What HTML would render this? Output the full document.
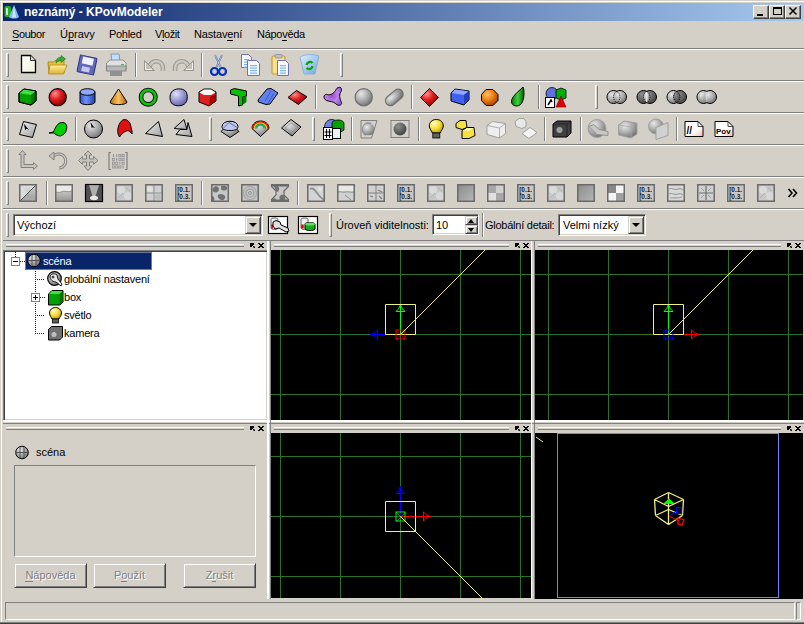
<!DOCTYPE html><html><head><meta charset="utf-8"><style>
*{margin:0;padding:0}
html,body{width:804px;height:624px;overflow:hidden;background:#d4d0c8;position:relative;font-family:"Liberation Sans",sans-serif;font-size:11px;color:#000}
.a{position:absolute}
.t{position:absolute;white-space:nowrap;line-height:13px}
u{text-decoration:none;border-bottom:1px solid currentColor}
</style></head><body>
<div style="position:absolute;left:0px;top:1px;width:804px;height:1px;background:#fff;"></div>
<div style="position:absolute;left:1px;top:1px;width:1px;height:623px;background:#fff;"></div>
<div style="position:absolute;left:0px;top:622px;width:804px;height:1px;background:#808080;"></div>
<div style="position:absolute;left:0px;top:623px;width:804px;height:1px;background:#404040;"></div>
<div style="position:absolute;left:3px;top:3px;width:801px;height:18px;background:linear-gradient(to right,#0a246a,#a6caf0);"></div>
<div class="t" style="left:24px;top:6px;color:#fff;font-weight:bold;font-size:12px">neznámý - KPovModeler</div>
<div class="a" style="left:753px;top:5px;width:16px;height:14px;box-sizing:border-box;background:#d4d0c8;border-top:1px solid #fff;border-left:1px solid #fff;border-right:1px solid #404040;border-bottom:1px solid #404040;box-shadow:inset -1px -1px 0 #808080"></div>
<div class="a" style="left:769px;top:5px;width:16px;height:14px;box-sizing:border-box;background:#d4d0c8;border-top:1px solid #fff;border-left:1px solid #fff;border-right:1px solid #404040;border-bottom:1px solid #404040;box-shadow:inset -1px -1px 0 #808080"></div>
<div class="a" style="left:785px;top:5px;width:16px;height:14px;box-sizing:border-box;background:#d4d0c8;border-top:1px solid #fff;border-left:1px solid #fff;border-right:1px solid #404040;border-bottom:1px solid #404040;box-shadow:inset -1px -1px 0 #808080"></div>
<div class="t" style="left:12px;top:28px;letter-spacing:-0.4px"><u>S</u>oubor</div>
<div class="t" style="left:60px;top:28px;letter-spacing:0px">Ú<u>p</u>ravy</div>
<div class="t" style="left:109px;top:28px;letter-spacing:-0.3px">Po<u>h</u>led</div>
<div class="t" style="left:155px;top:28px;letter-spacing:-0.4px">V<u>l</u>ožit</div>
<div class="t" style="left:194px;top:28px;letter-spacing:-0.15px">Nastav<u>e</u>ní</div>
<div class="t" style="left:257px;top:28px;letter-spacing:-0.28px">Nápo<u>v</u>ěda</div>
<div style="position:absolute;left:3px;top:48px;width:801px;height:1px;background:#808080;"></div>
<div style="position:absolute;left:3px;top:49px;width:801px;height:1px;background:#fff;"></div>
<div style="position:absolute;left:3px;top:80px;width:801px;height:1px;background:#808080;"></div>
<div style="position:absolute;left:3px;top:81px;width:801px;height:1px;background:#fff;"></div>
<div style="position:absolute;left:3px;top:112px;width:801px;height:1px;background:#808080;"></div>
<div style="position:absolute;left:3px;top:113px;width:801px;height:1px;background:#fff;"></div>
<div style="position:absolute;left:3px;top:144px;width:801px;height:1px;background:#808080;"></div>
<div style="position:absolute;left:3px;top:145px;width:801px;height:1px;background:#fff;"></div>
<div style="position:absolute;left:3px;top:176px;width:801px;height:1px;background:#808080;"></div>
<div style="position:absolute;left:3px;top:177px;width:801px;height:1px;background:#fff;"></div>
<div style="position:absolute;left:3px;top:208px;width:801px;height:1px;background:#808080;"></div>
<div style="position:absolute;left:3px;top:209px;width:801px;height:1px;background:#fff;"></div>
<div style="position:absolute;left:3px;top:240px;width:801px;height:1px;background:#808080;"></div>
<div class="a" style="left:6px;top:53px;width:3px;height:24px;box-sizing:border-box;border-top:1px solid #fff;border-left:1px solid #fff;border-right:1px solid #808080;border-bottom:1px solid #808080"></div>
<div class="a" style="left:340px;top:53px;width:3px;height:24px;box-sizing:border-box;border-top:1px solid #fff;border-left:1px solid #fff;border-right:1px solid #808080;border-bottom:1px solid #808080"></div>
<div class="a" style="left:6px;top:85px;width:3px;height:24px;box-sizing:border-box;border-top:1px solid #fff;border-left:1px solid #fff;border-right:1px solid #808080;border-bottom:1px solid #808080"></div>
<div class="a" style="left:595px;top:85px;width:3px;height:24px;box-sizing:border-box;border-top:1px solid #fff;border-left:1px solid #fff;border-right:1px solid #808080;border-bottom:1px solid #808080"></div>
<div class="a" style="left:6px;top:117px;width:3px;height:24px;box-sizing:border-box;border-top:1px solid #fff;border-left:1px solid #fff;border-right:1px solid #808080;border-bottom:1px solid #808080"></div>
<div class="a" style="left:209px;top:117px;width:3px;height:24px;box-sizing:border-box;border-top:1px solid #fff;border-left:1px solid #fff;border-right:1px solid #808080;border-bottom:1px solid #808080"></div>
<div class="a" style="left:312px;top:117px;width:3px;height:24px;box-sizing:border-box;border-top:1px solid #fff;border-left:1px solid #fff;border-right:1px solid #808080;border-bottom:1px solid #808080"></div>
<div class="a" style="left:6px;top:149px;width:3px;height:24px;box-sizing:border-box;border-top:1px solid #fff;border-left:1px solid #fff;border-right:1px solid #808080;border-bottom:1px solid #808080"></div>
<div class="a" style="left:6px;top:181px;width:3px;height:24px;box-sizing:border-box;border-top:1px solid #fff;border-left:1px solid #fff;border-right:1px solid #808080;border-bottom:1px solid #808080"></div>
<div class="a" style="left:6px;top:213px;width:3px;height:24px;box-sizing:border-box;border-top:1px solid #fff;border-left:1px solid #fff;border-right:1px solid #808080;border-bottom:1px solid #808080"></div>
<div class="a" style="left:329px;top:213px;width:3px;height:24px;box-sizing:border-box;border-top:1px solid #fff;border-left:1px solid #fff;border-right:1px solid #808080;border-bottom:1px solid #808080"></div>
<div style="position:absolute;left:135px;top:53px;width:1px;height:24px;background:#808080;"></div><div style="position:absolute;left:136px;top:53px;width:1px;height:24px;background:#fff;"></div>
<div style="position:absolute;left:201px;top:53px;width:1px;height:24px;background:#808080;"></div><div style="position:absolute;left:202px;top:53px;width:1px;height:24px;background:#fff;"></div>
<div style="position:absolute;left:315px;top:85px;width:1px;height:24px;background:#808080;"></div><div style="position:absolute;left:316px;top:85px;width:1px;height:24px;background:#fff;"></div>
<div style="position:absolute;left:411px;top:85px;width:1px;height:24px;background:#808080;"></div><div style="position:absolute;left:412px;top:85px;width:1px;height:24px;background:#fff;"></div>
<div style="position:absolute;left:538px;top:85px;width:1px;height:24px;background:#808080;"></div><div style="position:absolute;left:539px;top:85px;width:1px;height:24px;background:#fff;"></div>
<div style="position:absolute;left:75px;top:117px;width:1px;height:24px;background:#808080;"></div><div style="position:absolute;left:76px;top:117px;width:1px;height:24px;background:#fff;"></div>
<div style="position:absolute;left:351px;top:117px;width:1px;height:24px;background:#808080;"></div><div style="position:absolute;left:352px;top:117px;width:1px;height:24px;background:#fff;"></div>
<div style="position:absolute;left:418px;top:117px;width:1px;height:24px;background:#808080;"></div><div style="position:absolute;left:419px;top:117px;width:1px;height:24px;background:#fff;"></div>
<div style="position:absolute;left:544px;top:117px;width:1px;height:24px;background:#808080;"></div><div style="position:absolute;left:545px;top:117px;width:1px;height:24px;background:#fff;"></div>
<div style="position:absolute;left:580px;top:117px;width:1px;height:24px;background:#808080;"></div><div style="position:absolute;left:581px;top:117px;width:1px;height:24px;background:#fff;"></div>
<div style="position:absolute;left:676px;top:117px;width:1px;height:24px;background:#808080;"></div><div style="position:absolute;left:677px;top:117px;width:1px;height:24px;background:#fff;"></div>
<div style="position:absolute;left:46px;top:181px;width:1px;height:24px;background:#808080;"></div><div style="position:absolute;left:47px;top:181px;width:1px;height:24px;background:#fff;"></div>
<div style="position:absolute;left:201px;top:181px;width:1px;height:24px;background:#808080;"></div><div style="position:absolute;left:202px;top:181px;width:1px;height:24px;background:#fff;"></div>
<div style="position:absolute;left:297px;top:181px;width:1px;height:24px;background:#808080;"></div><div style="position:absolute;left:298px;top:181px;width:1px;height:24px;background:#fff;"></div>
<div style="position:absolute;left:482px;top:213px;width:1px;height:24px;background:#808080;"></div><div style="position:absolute;left:483px;top:213px;width:1px;height:24px;background:#fff;"></div>
<!--ICONS-->
<div class="a" style="left:13px;top:214px;width:250px;height:22px;box-sizing:border-box;background:#fff;border-top:1px solid #808080;border-left:1px solid #808080;border-right:1px solid #fff;border-bottom:1px solid #fff;box-shadow:inset 1px 1px 0 #404040,inset -1px -1px 0 #d4d0c8"></div>
<div class="t" style="left:17px;top:219px">Výchozí</div>
<div class="a" style="left:245px;top:216px;width:16px;height:18px;box-sizing:border-box;background:#d4d0c8;border-top:1px solid #d4d0c8;border-left:1px solid #d4d0c8;border-right:1px solid #404040;border-bottom:1px solid #404040;box-shadow:inset 1px 1px 0 #fff,inset -1px -1px 0 #808080"></div>
<div class="a" style="left:249px;top:223px;width:0;height:0;border-left:4px solid transparent;border-right:4px solid transparent;border-top:4px solid #000"></div>
<div class="t" style="left:336px;top:219px">Úroveň viditelnosti:</div>
<div class="a" style="left:432px;top:214px;width:47px;height:21px;box-sizing:border-box;background:#fff;border-top:1px solid #808080;border-left:1px solid #808080;border-right:1px solid #fff;border-bottom:1px solid #fff;box-shadow:inset 1px 1px 0 #404040,inset -1px -1px 0 #d4d0c8"></div>
<div class="t" style="left:436px;top:219px">10</div>
<div class="a" style="left:465px;top:216px;width:13px;height:9px;box-sizing:border-box;background:#d4d0c8;border-top:1px solid #d4d0c8;border-left:1px solid #d4d0c8;border-right:1px solid #404040;border-bottom:1px solid #404040;box-shadow:inset 1px 1px 0 #fff,inset -1px -1px 0 #808080"></div>
<div class="a" style="left:465px;top:225px;width:13px;height:9px;box-sizing:border-box;background:#d4d0c8;border-top:1px solid #d4d0c8;border-left:1px solid #d4d0c8;border-right:1px solid #404040;border-bottom:1px solid #404040;box-shadow:inset 1px 1px 0 #fff,inset -1px -1px 0 #808080"></div>
<div class="a" style="left:468px;top:219px;width:0;height:0;border-left:3.5px solid transparent;border-right:3.5px solid transparent;border-bottom:4px solid #000"></div>
<div class="a" style="left:468px;top:228px;width:0;height:0;border-left:3.5px solid transparent;border-right:3.5px solid transparent;border-top:4px solid #000"></div>
<div class="t" style="left:485px;top:219px;letter-spacing:-0.25px">Globální detail:</div>
<div class="a" style="left:558px;top:214px;width:88px;height:22px;box-sizing:border-box;background:#fff;border-top:1px solid #808080;border-left:1px solid #808080;border-right:1px solid #fff;border-bottom:1px solid #fff;box-shadow:inset 1px 1px 0 #404040,inset -1px -1px 0 #d4d0c8"></div>
<div class="t" style="left:563px;top:219px">Velmi nízký</div>
<div class="a" style="left:628px;top:216px;width:16px;height:18px;box-sizing:border-box;background:#d4d0c8;border-top:1px solid #d4d0c8;border-left:1px solid #d4d0c8;border-right:1px solid #404040;border-bottom:1px solid #404040;box-shadow:inset 1px 1px 0 #fff,inset -1px -1px 0 #808080"></div>
<div class="a" style="left:632px;top:223px;width:0;height:0;border-left:4px solid transparent;border-right:4px solid transparent;border-top:4px solid #000"></div>
<div class="a" style="left:6px;top:244px;width:238px;height:3px;box-sizing:border-box;border-top:1px solid #fff;border-bottom:1px solid #808080"></div><svg class="a" style="left:250px;top:243px" width="14" height="5" shape-rendering="crispEdges"><rect x="0" y="0" width="4" height="2"/><rect x="0" y="0" width="2" height="4"/><rect x="2" y="2" width="1" height="1"/><rect x="3" y="3" width="1" height="1"/><rect x="4" y="4" width="1" height="1"/><rect x="4" y="3" width="1" height="1" fill-opacity=".5"/><rect x="3" y="4" width="1" height="1" fill-opacity=".5"/><rect x="8" y="0" width="1" height="1"/><rect x="9" y="0" width="1" height="1"/><rect x="12" y="0" width="1" height="1"/><rect x="13" y="0" width="1" height="1"/><rect x="9" y="1" width="1" height="1"/><rect x="10" y="1" width="1" height="1"/><rect x="11" y="1" width="1" height="1"/><rect x="12" y="1" width="1" height="1"/><rect x="10" y="2" width="1" height="1"/><rect x="11" y="2" width="1" height="1"/><rect x="9" y="3" width="1" height="1"/><rect x="10" y="3" width="1" height="1"/><rect x="11" y="3" width="1" height="1"/><rect x="12" y="3" width="1" height="1"/><rect x="8" y="4" width="1" height="1"/><rect x="9" y="4" width="1" height="1"/><rect x="12" y="4" width="1" height="1"/><rect x="13" y="4" width="1" height="1"/></svg>
<div class="a" style="left:6px;top:427px;width:238px;height:3px;box-sizing:border-box;border-top:1px solid #fff;border-bottom:1px solid #808080"></div><svg class="a" style="left:250px;top:426px" width="14" height="5" shape-rendering="crispEdges"><rect x="0" y="0" width="4" height="2"/><rect x="0" y="0" width="2" height="4"/><rect x="2" y="2" width="1" height="1"/><rect x="3" y="3" width="1" height="1"/><rect x="4" y="4" width="1" height="1"/><rect x="4" y="3" width="1" height="1" fill-opacity=".5"/><rect x="3" y="4" width="1" height="1" fill-opacity=".5"/><rect x="8" y="0" width="1" height="1"/><rect x="9" y="0" width="1" height="1"/><rect x="12" y="0" width="1" height="1"/><rect x="13" y="0" width="1" height="1"/><rect x="9" y="1" width="1" height="1"/><rect x="10" y="1" width="1" height="1"/><rect x="11" y="1" width="1" height="1"/><rect x="12" y="1" width="1" height="1"/><rect x="10" y="2" width="1" height="1"/><rect x="11" y="2" width="1" height="1"/><rect x="9" y="3" width="1" height="1"/><rect x="10" y="3" width="1" height="1"/><rect x="11" y="3" width="1" height="1"/><rect x="12" y="3" width="1" height="1"/><rect x="8" y="4" width="1" height="1"/><rect x="9" y="4" width="1" height="1"/><rect x="12" y="4" width="1" height="1"/><rect x="13" y="4" width="1" height="1"/></svg>
<div class="a" style="left:274px;top:244px;width:235px;height:3px;box-sizing:border-box;border-top:1px solid #fff;border-bottom:1px solid #808080"></div><svg class="a" style="left:515px;top:243px" width="14" height="5" shape-rendering="crispEdges"><rect x="0" y="0" width="4" height="2"/><rect x="0" y="0" width="2" height="4"/><rect x="2" y="2" width="1" height="1"/><rect x="3" y="3" width="1" height="1"/><rect x="4" y="4" width="1" height="1"/><rect x="4" y="3" width="1" height="1" fill-opacity=".5"/><rect x="3" y="4" width="1" height="1" fill-opacity=".5"/><rect x="8" y="0" width="1" height="1"/><rect x="9" y="0" width="1" height="1"/><rect x="12" y="0" width="1" height="1"/><rect x="13" y="0" width="1" height="1"/><rect x="9" y="1" width="1" height="1"/><rect x="10" y="1" width="1" height="1"/><rect x="11" y="1" width="1" height="1"/><rect x="12" y="1" width="1" height="1"/><rect x="10" y="2" width="1" height="1"/><rect x="11" y="2" width="1" height="1"/><rect x="9" y="3" width="1" height="1"/><rect x="10" y="3" width="1" height="1"/><rect x="11" y="3" width="1" height="1"/><rect x="12" y="3" width="1" height="1"/><rect x="8" y="4" width="1" height="1"/><rect x="9" y="4" width="1" height="1"/><rect x="12" y="4" width="1" height="1"/><rect x="13" y="4" width="1" height="1"/></svg>
<div class="a" style="left:538px;top:244px;width:243px;height:3px;box-sizing:border-box;border-top:1px solid #fff;border-bottom:1px solid #808080"></div><svg class="a" style="left:787px;top:243px" width="14" height="5" shape-rendering="crispEdges"><rect x="0" y="0" width="4" height="2"/><rect x="0" y="0" width="2" height="4"/><rect x="2" y="2" width="1" height="1"/><rect x="3" y="3" width="1" height="1"/><rect x="4" y="4" width="1" height="1"/><rect x="4" y="3" width="1" height="1" fill-opacity=".5"/><rect x="3" y="4" width="1" height="1" fill-opacity=".5"/><rect x="8" y="0" width="1" height="1"/><rect x="9" y="0" width="1" height="1"/><rect x="12" y="0" width="1" height="1"/><rect x="13" y="0" width="1" height="1"/><rect x="9" y="1" width="1" height="1"/><rect x="10" y="1" width="1" height="1"/><rect x="11" y="1" width="1" height="1"/><rect x="12" y="1" width="1" height="1"/><rect x="10" y="2" width="1" height="1"/><rect x="11" y="2" width="1" height="1"/><rect x="9" y="3" width="1" height="1"/><rect x="10" y="3" width="1" height="1"/><rect x="11" y="3" width="1" height="1"/><rect x="12" y="3" width="1" height="1"/><rect x="8" y="4" width="1" height="1"/><rect x="9" y="4" width="1" height="1"/><rect x="12" y="4" width="1" height="1"/><rect x="13" y="4" width="1" height="1"/></svg>
<div class="a" style="left:274px;top:427px;width:235px;height:3px;box-sizing:border-box;border-top:1px solid #fff;border-bottom:1px solid #808080"></div><svg class="a" style="left:515px;top:426px" width="14" height="5" shape-rendering="crispEdges"><rect x="0" y="0" width="4" height="2"/><rect x="0" y="0" width="2" height="4"/><rect x="2" y="2" width="1" height="1"/><rect x="3" y="3" width="1" height="1"/><rect x="4" y="4" width="1" height="1"/><rect x="4" y="3" width="1" height="1" fill-opacity=".5"/><rect x="3" y="4" width="1" height="1" fill-opacity=".5"/><rect x="8" y="0" width="1" height="1"/><rect x="9" y="0" width="1" height="1"/><rect x="12" y="0" width="1" height="1"/><rect x="13" y="0" width="1" height="1"/><rect x="9" y="1" width="1" height="1"/><rect x="10" y="1" width="1" height="1"/><rect x="11" y="1" width="1" height="1"/><rect x="12" y="1" width="1" height="1"/><rect x="10" y="2" width="1" height="1"/><rect x="11" y="2" width="1" height="1"/><rect x="9" y="3" width="1" height="1"/><rect x="10" y="3" width="1" height="1"/><rect x="11" y="3" width="1" height="1"/><rect x="12" y="3" width="1" height="1"/><rect x="8" y="4" width="1" height="1"/><rect x="9" y="4" width="1" height="1"/><rect x="12" y="4" width="1" height="1"/><rect x="13" y="4" width="1" height="1"/></svg>
<div class="a" style="left:538px;top:427px;width:243px;height:3px;box-sizing:border-box;border-top:1px solid #fff;border-bottom:1px solid #808080"></div><svg class="a" style="left:787px;top:426px" width="14" height="5" shape-rendering="crispEdges"><rect x="0" y="0" width="4" height="2"/><rect x="0" y="0" width="2" height="4"/><rect x="2" y="2" width="1" height="1"/><rect x="3" y="3" width="1" height="1"/><rect x="4" y="4" width="1" height="1"/><rect x="4" y="3" width="1" height="1" fill-opacity=".5"/><rect x="3" y="4" width="1" height="1" fill-opacity=".5"/><rect x="8" y="0" width="1" height="1"/><rect x="9" y="0" width="1" height="1"/><rect x="12" y="0" width="1" height="1"/><rect x="13" y="0" width="1" height="1"/><rect x="9" y="1" width="1" height="1"/><rect x="10" y="1" width="1" height="1"/><rect x="11" y="1" width="1" height="1"/><rect x="12" y="1" width="1" height="1"/><rect x="10" y="2" width="1" height="1"/><rect x="11" y="2" width="1" height="1"/><rect x="9" y="3" width="1" height="1"/><rect x="10" y="3" width="1" height="1"/><rect x="11" y="3" width="1" height="1"/><rect x="12" y="3" width="1" height="1"/><rect x="8" y="4" width="1" height="1"/><rect x="9" y="4" width="1" height="1"/><rect x="12" y="4" width="1" height="1"/><rect x="13" y="4" width="1" height="1"/></svg>
<div class="a" style="left:3px;top:250px;width:265px;height:171px;box-sizing:border-box;background:#fff;border-top:1px solid #808080;border-left:1px solid #808080;border-right:1px solid #fff;border-bottom:1px solid #fff;box-shadow:inset 1px 1px 0 #404040,inset -1px -1px 0 #d4d0c8"></div>
<div class="a" style="left:25px;top:252px;width:127px;height:18px;background:#0a246a"></div>
<div class="t" style="left:43px;top:255px;color:#fff;letter-spacing:-0.2px">scéna</div>
<div class="t" style="left:64px;top:273px;color:#000;letter-spacing:-0.2px">globální nastavení</div>
<div class="t" style="left:64px;top:291px;color:#000;letter-spacing:-0.2px">box</div>
<div class="t" style="left:64px;top:309px;color:#000;letter-spacing:-0.2px">světlo</div>
<div class="t" style="left:64px;top:327px;color:#000;letter-spacing:-0.2px">kamera</div>
<div style="position:absolute;left:3px;top:420px;width:801px;height:2px;background:#fff;"></div>
<div style="position:absolute;left:3px;top:423px;width:801px;height:1px;background:#808080;"></div>
<div style="position:absolute;left:267px;top:241px;width:2px;height:358px;background:#fff;"></div>
<div style="position:absolute;left:270px;top:241px;width:1px;height:358px;background:#808080;"></div>
<div style="position:absolute;left:531px;top:241px;width:1px;height:358px;background:#fff;"></div>
<div style="position:absolute;left:534px;top:241px;width:1px;height:358px;background:#808080;"></div>
<div class="t" style="left:36px;top:446px">scéna</div>
<div class="a" style="left:14px;top:465px;width:242px;height:92px;box-sizing:border-box;border-top:1px solid #808080;border-left:1px solid #808080;border-right:1px solid #fff;border-bottom:1px solid #fff"></div>
<div class="a" style="left:14px;top:563px;width:73px;height:25px;box-sizing:border-box;background:#d4d0c8;border-top:1px solid #d4d0c8;border-left:1px solid #d4d0c8;border-right:1px solid #404040;border-bottom:1px solid #404040;box-shadow:inset 1px 1px 0 #fff,inset -1px -1px 0 #808080"></div>
<div class="t" style="left:14px;width:73px;text-align:center;top:569px;color:#808080;text-shadow:1px 1px 0 #fff"><u>N</u>ápověda</div>
<div class="a" style="left:93px;top:563px;width:73px;height:25px;box-sizing:border-box;background:#d4d0c8;border-top:1px solid #d4d0c8;border-left:1px solid #d4d0c8;border-right:1px solid #404040;border-bottom:1px solid #404040;box-shadow:inset 1px 1px 0 #fff,inset -1px -1px 0 #808080"></div>
<div class="t" style="left:93px;width:73px;text-align:center;top:569px;color:#808080;text-shadow:1px 1px 0 #fff">P<u>o</u>užít</div>
<div class="a" style="left:183px;top:563px;width:73px;height:25px;box-sizing:border-box;background:#d4d0c8;border-top:1px solid #d4d0c8;border-left:1px solid #d4d0c8;border-right:1px solid #404040;border-bottom:1px solid #404040;box-shadow:inset 1px 1px 0 #fff,inset -1px -1px 0 #808080"></div>
<div class="t" style="left:183px;width:73px;text-align:center;top:569px;color:#808080;text-shadow:1px 1px 0 #fff">Z<u>r</u>ušit</div>
<div class="a" style="left:5px;top:602px;width:790px;height:18px;box-sizing:border-box;border-top:1px solid #808080;border-left:1px solid #808080;border-right:1px solid #fff;border-bottom:1px solid #fff"></div>
<div class="a" style="left:796px;top:602px;width:5px;height:18px;box-sizing:border-box;border-top:1px solid #808080;border-left:1px solid #808080;border-right:1px solid #fff;border-bottom:1px solid #fff"></div>
<svg class="a" style="left:271px;top:250px" width="260" height="170" viewBox="271 250 260 170" shape-rendering="crispEdges"><rect x="271" y="250" width="260" height="170" fill="#000"/><rect x="280" y="250" width="1" height="170" fill="#267326"/><rect x="340" y="250" width="1" height="170" fill="#267326"/><rect x="400" y="250" width="1" height="170" fill="#267326"/><rect x="460" y="250" width="1" height="170" fill="#267326"/><rect x="520" y="250" width="1" height="170" fill="#267326"/><rect x="271" y="274" width="260" height="1" fill="#267326"/><rect x="271" y="334" width="260" height="1" fill="#267326"/><rect x="271" y="394" width="260" height="1" fill="#267326"/></svg>
<svg class="a" style="left:535px;top:250px" width="268" height="170" viewBox="535 250 268 170" shape-rendering="crispEdges"><rect x="535" y="250" width="268" height="170" fill="#000"/><rect x="548" y="250" width="1" height="170" fill="#267326"/><rect x="608" y="250" width="1" height="170" fill="#267326"/><rect x="668" y="250" width="1" height="170" fill="#267326"/><rect x="728" y="250" width="1" height="170" fill="#267326"/><rect x="788" y="250" width="1" height="170" fill="#267326"/><rect x="535" y="274" width="268" height="1" fill="#267326"/><rect x="535" y="334" width="268" height="1" fill="#267326"/><rect x="535" y="394" width="268" height="1" fill="#267326"/></svg>
<svg class="a" style="left:271px;top:433px" width="260" height="165" viewBox="271 433 260 165" shape-rendering="crispEdges"><rect x="271" y="433" width="260" height="165" fill="#000"/><rect x="280" y="433" width="1" height="165" fill="#267326"/><rect x="340" y="433" width="1" height="165" fill="#267326"/><rect x="400" y="433" width="1" height="165" fill="#267326"/><rect x="460" y="433" width="1" height="165" fill="#267326"/><rect x="520" y="433" width="1" height="165" fill="#267326"/><rect x="271" y="456" width="260" height="1" fill="#267326"/><rect x="271" y="516" width="260" height="1" fill="#267326"/><rect x="271" y="576" width="260" height="1" fill="#267326"/></svg>
<svg class="a" style="left:535px;top:433px" width="268" height="166" viewBox="535 433 268 166"><rect x="535" y="433" width="268" height="166" fill="#000"/><rect x="557.5" y="433.5" width="221" height="164" fill="none" stroke="#8080ff"/></svg>
<svg class="a" style="left:0;top:0" width="804" height="624" viewBox="0 0 804 624"><defs>
<radialGradient id="gRed" cx="35%" cy="30%" r="75%"><stop offset="0" stop-color="#ff9090"/><stop offset=".45" stop-color="#e02020"/><stop offset="1" stop-color="#800000"/></radialGradient>
<radialGradient id="gGray" cx="35%" cy="30%" r="75%"><stop offset="0" stop-color="#e8e8e8"/><stop offset=".5" stop-color="#b0b0b0"/><stop offset="1" stop-color="#707070"/></radialGradient>
<radialGradient id="gDark" cx="35%" cy="30%" r="75%"><stop offset="0" stop-color="#909090"/><stop offset="1" stop-color="#404040"/></radialGradient>
<radialGradient id="gOrange" cx="35%" cy="30%" r="75%"><stop offset="0" stop-color="#ffc070"/><stop offset=".5" stop-color="#f08010"/><stop offset="1" stop-color="#a04000"/></radialGradient>
<radialGradient id="gLav" cx="35%" cy="30%" r="75%"><stop offset="0" stop-color="#e0e0ff"/><stop offset=".5" stop-color="#a0a0d8"/><stop offset="1" stop-color="#6060a0"/></radialGradient>
<radialGradient id="gPurple" cx="45%" cy="45%" r="60%"><stop offset="0" stop-color="#9050c0"/><stop offset=".6" stop-color="#c080f0"/><stop offset="1" stop-color="#9060d0"/></radialGradient>
<radialGradient id="gYellow" cx="35%" cy="30%" r="75%"><stop offset="0" stop-color="#ffffc0"/><stop offset=".5" stop-color="#f8e040"/><stop offset="1" stop-color="#c0a000"/></radialGradient>
<linearGradient id="gBlueCyl" x1="0" x2="1"><stop offset="0" stop-color="#3050c0"/><stop offset=".4" stop-color="#7090ff"/><stop offset="1" stop-color="#2040a0"/></linearGradient>
<linearGradient id="gGreenDrop" x1="0" x2="1"><stop offset="0" stop-color="#008000"/><stop offset=".5" stop-color="#40d040"/><stop offset="1" stop-color="#006000"/></linearGradient>
<linearGradient id="gCone" x1="0" x2="1"><stop offset="0" stop-color="#c07010"/><stop offset=".5" stop-color="#f8c060"/><stop offset="1" stop-color="#b06000"/></linearGradient>
<linearGradient id="gTexGrad" x1="0" y1="0" x2="0" y2="1"><stop offset="0" stop-color="#e8e8e4"/><stop offset="1" stop-color="#909090"/></linearGradient>
<linearGradient id="gDiag" x1="0" y1="0" x2="1" y2="1"><stop offset="0" stop-color="#f0f0f0"/><stop offset="1" stop-color="#a0a0a0"/></linearGradient>
<linearGradient id="gGraySq" x1="0" y1="0" x2="1" y2="1"><stop offset="0" stop-color="#8a8a8a"/><stop offset="1" stop-color="#b8b8b8"/></linearGradient>
<linearGradient id="gFolder" x1="0" y1="0" x2="0" y2="1"><stop offset="0" stop-color="#fff0a0"/><stop offset="1" stop-color="#e0b030"/></linearGradient>
<linearGradient id="gBin" x1="0" y1="0" x2="1" y2="1"><stop offset="0" stop-color="#e0f0ff"/><stop offset="1" stop-color="#70a8e0"/></linearGradient>
<linearGradient id="gPaper" x1="0" y1="0" x2="1" y2="1"><stop offset="0" stop-color="#ffffff"/><stop offset="1" stop-color="#f0f0d8"/></linearGradient>
<linearGradient id="gPov" x1="0" y1="0" x2="1" y2="1"><stop offset="0" stop-color="#ffffff"/><stop offset=".6" stop-color="#fff"/><stop offset="1" stop-color="#ffb0b0"/></linearGradient>
</defs><g transform="translate(20 54)"><path d="M1.5 1.5H10.5L15.5 6.5V18.5H1.5Z" fill="url(#gPaper)" stroke="#000" stroke-width="1.3"/><path d="M10.5 1.5V6.5H15.5" fill="#d8d8d0" stroke="#000" stroke-width=".8"/></g><g transform="translate(47 54)"><path d="M1 8H7L8 6.5H17V19H2Z" fill="#e8c040" stroke="#a08010" stroke-width=".8"/><path d="M3 11H20L16.5 20H1.5Z" fill="url(#gFolder)" stroke="#b08a10" stroke-width=".8"/><path d="M9 9C9 5 11 3.5 14 3.5V1.5L18.5 5L14 8.5V6.5C12 6.5 10.5 7.5 9 9Z" fill="#30b030" stroke="#107010" stroke-width=".6"/></g><g transform="translate(76.5 54.5)"><g transform="rotate(12 10.5 10.5)"><rect x="2" y="2" width="17" height="17" rx="1" fill="#6068b8" stroke="#303080" stroke-width="1"/><rect x="5" y="3" width="11" height="7" fill="#f0f0ff"/><rect x="6" y="12.5" width="8" height="5" fill="#c8c8f0"/></g></g><g transform="translate(105 53)"><path d="M6 1L14 1L15 9H7Z" fill="#c0e0ff" stroke="#6080a0" stroke-width=".7"/><path d="M1.5 10L5 7H18L21 10V17H1.5Z" fill="#e0e0e0" stroke="#808080" stroke-width=".8"/><rect x="1.5" y="13" width="19.5" height="5" fill="#b8b8b8" stroke="#707070" stroke-width=".7"/><rect x="5" y="18" width="12" height="5" fill="#909090"/><rect x="16" y="11" width="3" height="1.2" fill="#40c040"/></g><g transform="translate(143 57)"><g><path d="M6.5 10.5C7 2.5 20 1.5 20 12V14" fill="none" stroke="#9a968e" stroke-width="4.6"/><path d="M6.5 10.5C7 2.5 20 1.5 20 12V14" fill="none" stroke="#cdc9c1" stroke-width="2.6"/><path d="M1.5 3.5L1.5 13.5H11.5Z" fill="#c4c0b8" stroke="#9a968e" stroke-width="1"/><path d="M2.5 6L2.5 12.5H9" fill="none" stroke="#fff" stroke-width=".8"/></g></g><g transform="translate(173 57)"><g transform="translate(22 0) scale(-1 1)"><path d="M6.5 10.5C7 2.5 20 1.5 20 12V14" fill="none" stroke="#9a968e" stroke-width="4.6"/><path d="M6.5 10.5C7 2.5 20 1.5 20 12V14" fill="none" stroke="#cdc9c1" stroke-width="2.6"/><path d="M1.5 3.5L1.5 13.5H11.5Z" fill="#c4c0b8" stroke="#9a968e" stroke-width="1"/><path d="M2.5 6L2.5 12.5H9" fill="none" stroke="#fff" stroke-width=".8"/></g></g><g transform="translate(210 54)"><path d="M5 1L10.5 13M12 1L6.5 13" stroke="#4060a0" stroke-width="1.8"/><path d="M5 1L10.5 13M12 1L6.5 13" stroke="#e0e8f0" stroke-width=".7"/><circle cx="4.5" cy="17.5" r="3.5" fill="none" stroke="#0030c0" stroke-width="2.2"/><circle cx="12.5" cy="17.5" r="3.5" fill="none" stroke="#0030c0" stroke-width="2.2"/></g><g transform="translate(241 54)"><path d="M0.5 0.5H7.5L10.5 3.5V13.5H0.5Z" fill="#f4f8ff" stroke="#7070b8" stroke-width="1"/><rect x="3" y="5.0" width="5" height="1.2" fill="#80b0f0"/><rect x="3" y="7.5" width="5" height="1.2" fill="#80b0f0"/><rect x="3" y="10.0" width="5" height="1.2" fill="#80b0f0"/><rect x="3" y="12.5" width="5" height="1.2" fill="#80b0f0"/><path d="M6.5 6.5H15.5L18.5 9.5V21.5H6.5Z" fill="#f4f8ff" stroke="#7070b8" stroke-width="1"/><rect x="9" y="11.0" width="7" height="1.2" fill="#80b0f0"/><rect x="9" y="13.5" width="7" height="1.2" fill="#80b0f0"/><rect x="9" y="16.0" width="7" height="1.2" fill="#80b0f0"/><rect x="9" y="18.5" width="7" height="1.2" fill="#80b0f0"/></g><g transform="translate(271 54)"><rect x="1" y="2" width="13" height="18" rx="1.5" fill="#f8e090" stroke="#c0a030" stroke-width="1.2"/><rect x="4" y="0.5" width="7" height="3.5" rx="1" fill="#c0c0c8" stroke="#8080a0" stroke-width=".7"/><path d="M6.5 6.5H14.5L17.5 9.5V21.5H6.5Z" fill="#f4f8ff" stroke="#7070b8" stroke-width="1"/><rect x="9" y="11.0" width="6" height="1.2" fill="#80b0f0"/><rect x="9" y="13.5" width="6" height="1.2" fill="#80b0f0"/><rect x="9" y="16.0" width="6" height="1.2" fill="#80b0f0"/><rect x="9" y="18.5" width="6" height="1.2" fill="#80b0f0"/></g><g transform="translate(299 54)"><path d="M1 3C6 0 15 0 20 2L16 20H5Z" fill="url(#gBin)" stroke="#80a8d0" stroke-width=".8"/><path d="M7.5 11A3.5 3.5 0 0 1 13.5 9M13.5 12A3.5 3.5 0 0 1 7.5 14" fill="none" stroke="#10a010" stroke-width="2.2"/></g><g transform="translate(18 88)"><path d="M1 5L6 1L18 3V13L13 17L1 14Z" fill="#00a000" stroke="#000" stroke-width="1"/><path d="M1 5L6 1L18 3L13 7Z" fill="#40e040"/><path d="M13 7L18 3V13L13 17Z" fill="#007000"/><path d="M1 5L6 1L18 3V13L13 17L1 14Z" fill="none" stroke="#000" stroke-width="1"/></g><g transform="translate(48.5 88)"><circle cx="9.2" cy="9.2" r="8.6" fill="url(#gRed)" stroke="#000" stroke-width="1.1"/></g><g transform="translate(79 88)"><path d="M1 4V14C1 17.5 16 17.5 16 14V4" fill="url(#gBlueCyl)" stroke="#000" stroke-width="1"/><ellipse cx="8.5" cy="4" rx="7.5" ry="3.3" fill="#90a8ff" stroke="#000" stroke-width="1"/></g><g transform="translate(109.5 88)"><path d="M9 1L17.5 14C17.5 17.5 0.5 17.5 0.5 14Z" fill="url(#gCone)" stroke="#000" stroke-width="1"/></g><g transform="translate(139 88)"><circle cx="9.2" cy="9.2" r="7.2" fill="none" stroke="#000" stroke-width="4.6"/><circle cx="9.2" cy="9.2" r="7.2" fill="none" stroke="#10c010" stroke-width="2.8"/></g><g transform="translate(169.5 88)"><path d="M2 4C5 0 13 0 16 3C19 7 18 14 15 16C11 19 4 18 2 15C0 12 0 7 2 4Z" fill="url(#gLav)" stroke="#000" stroke-width="1"/></g><g transform="translate(198 88)"><path d="M1 4L6 1L13 1L18 4V13L11 18L1 14Z" fill="#e02020" stroke="#000" stroke-width="1"/><path d="M1.5 4.5L6 1.5L13 1.5L17.5 4.5L13 7L6 7Z" fill="#f8f8f8"/><path d="M11 18L18 13V6L12 9Z" fill="#a00000"/></g><g transform="translate(229.5 88)"><path d="M1 2L5 0.5L17 3V8L13 9V17L9 18V8L1 6Z" fill="#00c000" stroke="#000" stroke-width="1"/><path d="M13 9V17L17 14V8Z" fill="#008000"/></g><g transform="translate(257 88)"><path d="M1 12L10 1L14 0.5L21 5L13 16L9 16.5L1.5 14Z" fill="#6080f0" stroke="#000" stroke-width="1"/><path d="M8 13L14 3M11 15L17 5" stroke="#3050b0" stroke-width=".8"/></g><g transform="translate(287.5 90)"><path d="M0.5 7.5L9.0 0.5L19.5 6.75L11.0 14.5Z" fill="url(#gRed)" stroke="#000" stroke-width="1"/></g><g transform="translate(323.5 86.5)"><path d="M15 1C18 0 19 3 17 6C15 9 17 14 18 16C19 19 14 20 12 17C10 15 6 15 3 14C-1 12 0 7 4 8C7 9 10 7 12 4C13 2 14 1 15 1Z" fill="url(#gPurple)" stroke="#000" stroke-width="1"/></g><g transform="translate(354.5 88)"><circle cx="9.2" cy="9.2" r="8.6" fill="url(#gGray)" stroke="#707070" stroke-width="1.2"/></g><g transform="translate(385 88)"><g transform="rotate(-40 9 9)"><rect x="-1" y="4.5" width="20" height="10" rx="5" fill="url(#gGray)" stroke="#707070" stroke-width="1.2"/></g></g><g transform="translate(420 88)"><path d="M9.5 0.5L18.5 9.5L9.5 18.5L0.5 9.5Z" fill="url(#gRed)" stroke="#000" stroke-width="1"/></g><g transform="translate(450 88)"><path d="M1 5L5 1L19 3V12L14 17L1 13Z" fill="#4060f0" stroke="#000" stroke-width="1"/><path d="M1.5 5L5 1.5L18.5 3.2L14 7Z" fill="#90a8ff"/><path d="M14 7L18.5 3.2V12L14 16.5Z" fill="#2040c0"/></g><g transform="translate(481 88.5)"><path d="M5 1H12L17 6V12L12 17H5L0.5 12V6Z" fill="url(#gOrange)" stroke="#000" stroke-width="1"/></g><g transform="translate(510.5 86.5)"><path d="M12.5 0.5C14 3 14 13 11 17C8 21 1 20 1 15C1 10 8 5 12.5 0.5Z" fill="url(#gGreenDrop)" stroke="#000" stroke-width="1"/></g><g transform="translate(545 87)"><circle cx="7" cy="6.5" r="6" fill="#6070e0" stroke="#000" stroke-width=".8"/><path d="M11 3L16 1L21 3V11L16 13L11 11Z" fill="#00b000" stroke="#000" stroke-width=".8"/><rect x="0.5" y="10.5" width="9" height="10" fill="#fff" stroke="#000" stroke-width="1"/><path d="M3 18L6 13L7 15" stroke="#000" stroke-width="1.5" fill="none"/><path d="M16 9L21 20H11Z" fill="#e00000" stroke="#600" stroke-width=".6"/></g><g transform="translate(606.5 90)"><circle cx="7" cy="7" r="6.5" fill="url(#gGray)"/><circle cx="13.5" cy="7" r="6.5" fill="url(#gGray)"/><path d="M10.25 1.37A6.5 6.5 0 1 0 10.25 12.63A6.5 6.5 0 1 0 10.25 1.37Z" fill="none" stroke="#000" stroke-width="1"/><path d="M10.25 1.37A6.5 6.5 0 0 1 10.25 12.63M10.25 1.37A6.5 6.5 0 0 0 10.25 12.63" fill="none" stroke="#000" stroke-width=".9" stroke-dasharray="1 1.2"/></g><g transform="translate(636.5 90)"><circle cx="7" cy="7" r="6.5" fill="url(#gDark)"/><circle cx="13.5" cy="7" r="6.5" fill="url(#gDark)"/><path d="M10.25 1.37A6.5 6.5 0 0 1 10.25 12.63A6.5 6.5 0 0 1 10.25 1.37Z" fill="url(#gGray)"/><path d="M10.25 2V12" stroke="#f0f0f0" stroke-width="1.2"/><path d="M10.25 1.37A6.5 6.5 0 1 0 10.25 12.63A6.5 6.5 0 1 0 10.25 1.37Z" fill="none" stroke="#000" stroke-width="1"/><path d="M10.25 1.37A6.5 6.5 0 0 1 10.25 12.63M10.25 1.37A6.5 6.5 0 0 0 10.25 12.63" fill="none" stroke="#000" stroke-width=".9" stroke-dasharray="1 1.2"/></g><g transform="translate(666.5 90)"><circle cx="7" cy="7" r="6.5" fill="url(#gGray)"/><circle cx="13.5" cy="7" r="6.5" fill="url(#gDark)"/><path d="M10.25 1.37A6.5 6.5 0 0 1 10.25 12.63A6.5 6.5 0 0 1 10.25 1.37Z" fill="url(#gDark)"/><path d="M10.25 1.37A6.5 6.5 0 1 0 10.25 12.63A6.5 6.5 0 1 0 10.25 1.37Z" fill="none" stroke="#000" stroke-width="1"/><path d="M10.25 1.37A6.5 6.5 0 0 1 10.25 12.63M10.25 1.37A6.5 6.5 0 0 0 10.25 12.63" fill="none" stroke="#000" stroke-width=".9" stroke-dasharray="1 1.2"/></g><g transform="translate(696.5 90)"><circle cx="7" cy="7" r="6.5" fill="url(#gGray)"/><circle cx="13.5" cy="7" r="6.5" fill="url(#gGray)"/><path d="M10.25 1.37A6.5 6.5 0 1 0 10.25 12.63A6.5 6.5 0 1 0 10.25 1.37Z" fill="none" stroke="#000" stroke-width="1"/><path d="M10.25 2.5V11.5" stroke="#d8d8d8" stroke-width=".8"/></g><g transform="translate(18.5 120.5)"><path d="M5 1L18 4L14 17L1 14Z" fill="url(#gDiag)" stroke="#000" stroke-width="1"/><path d="M6 4L7 9L8.5 7.5L10 9" fill="#000" stroke="#000" stroke-width=".8"/></g><g transform="translate(48.5 121)"><path d="M0.5 12L5 11C7 6 9 2 13 1.5C17 1 19 4 18 8C17.5 12 15 14 12 15C9 15 7 13 5 12Z" fill="#00d000" stroke="#000" stroke-width="1"/></g><g transform="translate(84 119.5)"><circle cx="9.5" cy="9.5" r="9" fill="url(#gGray)" stroke="#000" stroke-width="1"/><path d="M7 3.5L8 8L9 7L10.5 8.5" fill="#000" stroke="#000" stroke-width=".8"/></g><g transform="translate(116.5 119)"><path d="M3 18C0 14 1 6 5 2C8 -1 13 1 14 6C15 10 16 13 15.5 15C14 13 12 11 10 12C7 13 5 15 3 18Z" fill="#e01010" stroke="#000" stroke-width="1"/></g><g transform="translate(144.5 120.5)"><path d="M14 1L18 16L1 13Z" fill="url(#gDiag)" stroke="#000" stroke-width="1"/></g><g transform="translate(173 118.5)"><path d="M11 1L14 11L1 10Z" fill="url(#gDiag)" stroke="#000" stroke-width="1"/><path d="M15 4L19 18L3 16L7 11L14 11Z" fill="url(#gDiag)" stroke="#000" stroke-width="1"/></g><g transform="translate(220 118.5)"><path d="M1 13L10 4L19 13L10 19Z" fill="url(#gGray)" stroke="#000" stroke-width="1"/><path d="M2 8C2 1 18 1 18 8C18 11 15 12 10 12C5 12 2 11 2 8Z" fill="#c0c8f0" stroke="#000" stroke-width="1"/><path d="M3 10L9 4L17 9" stroke="#4050a0" stroke-width=".8" fill="none"/></g><g transform="translate(250.5 118.5)"><path d="M1.5 10C1.5 0 18.5 0 18.5 10L10 18Z" fill="url(#gGray)" stroke="#000" stroke-width="1"/><path d="M2.5 10C2.5 1.5 17.5 1.5 17.5 10" fill="none" stroke="#ff0000" stroke-width="1.4"/><path d="M4 10C4 3 16 3 16 10" fill="none" stroke="#ffc000" stroke-width="1.4"/><path d="M5.3 10C5.3 4.3 14.7 4.3 14.7 10" fill="none" stroke="#00c000" stroke-width="1.3"/><path d="M6.5 10C6.5 5.5 13.5 5.5 13.5 10" fill="none" stroke="#4080ff" stroke-width="1.2"/></g><g transform="translate(281 119)"><path d="M0.5 9L10 0.5L20 8L11 17Z" fill="url(#gGray)" stroke="#000" stroke-width="1"/><path d="M4 9L10 4L16 8L11 13Z" fill="none" stroke="#909090" stroke-width=".8"/></g><g transform="translate(323 119)"><path d="M1.5 9C1.5 3 5 0.5 9 0.5C12 0.5 13 2 13 4V9Z" fill="#7080e0" stroke="#000" stroke-width=".8"/><path d="M9 4C9 2 12 1 15 1C18 1 21 2 21 5V11L16 14L9 12Z" fill="#00a000" stroke="#000" stroke-width=".8"/><rect x="0.5" y="8.5" width="9" height="12" fill="#fff" stroke="#000" stroke-width="1"/><path d="M3.5 10V19M6.5 10V19M1.5 13H8.5M1.5 16.5H8.5" stroke="#000" stroke-width="1.1"/><rect x="9.5" y="9.5" width="8" height="10" fill="#e8f0f8" stroke="#000" stroke-width="1"/></g><g transform="translate(360.5 120)"><path d="M0.5 0.5H16.5L11 18H0.5Z" fill="none" stroke="#808080" stroke-width="1"/><path d="M11 3A6.5 7 0 0 0 5 16L11 3" fill="#909090"/><circle cx="8" cy="9.5" r="6" fill="url(#gGray)" clip-path="inset(0 0 0 0)"/></g><g transform="translate(390.5 120)"><rect x="0.5" y="0.5" width="18" height="17" fill="none" stroke="#808080" stroke-width="1"/><circle cx="9.5" cy="9" r="6.5" fill="url(#gDark)"/></g><g transform="translate(428.8 119)"><path d="M7.5 0.5C12 0.5 14.5 3.5 14.5 7C14.5 10 12 11.5 11.5 14H3.5C3 11.5 0.5 10 0.5 7C0.5 3.5 3 0.5 7.5 0.5Z" fill="url(#gYellow)" stroke="#000" stroke-width="1"/><rect x="4" y="14" width="7" height="5" fill="#606060" stroke="#000" stroke-width=".8"/></g><g transform="translate(455 119.5)"><path d="M1 4L5 1H11L12 8L7 10L1 8Z" fill="#f8e040" stroke="#000" stroke-width="1"/><path d="M7 11L12 8H19L20 16L14 19H7Z" fill="#f8e040" stroke="#000" stroke-width="1"/><path d="M7.5 11.5L12 8.5H18.5L14 11.5Z" fill="#ffffa0"/></g><g transform="translate(486.5 120.5)"><path d="M0.5 5L6 1L19 3V13L13 17.5L0.5 14Z" fill="#eeeeee" stroke="#a0a0a0" stroke-width="1"/><path d="M13 7.5V17.5M0.5 5L13 7.5L19 3" stroke="#a0a0a0" stroke-width=".8" fill="none"/></g><g transform="translate(514 117.5)"><path d="M1 4L5 1H10L12 4V9L8 11L2 9Z" fill="#e8e8e8" stroke="#a0a0a0" stroke-width="1"/><path d="M8 16L16 10L23 15L15 21Z" fill="#f4f4f4" stroke="#a0a0a0" stroke-width="1"/></g><g transform="translate(552 120)"><path d="M1 4L5 1H19V13L15 17H1Z" fill="#404040" stroke="#000" stroke-width="1"/><path d="M1 4H15V17M15 4L19 1" stroke="#202020" stroke-width=".8" fill="none"/><circle cx="7.5" cy="10" r="3" fill="#a0a0a0"/></g><g transform="translate(587 118.5)"><circle cx="10" cy="10" r="9" fill="url(#gGray)" stroke="#a0a0a0" stroke-width="1"/><path d="M2 8L7 6L12 11L21 13V17L10 16L5 11Z" fill="#c8c8c8" stroke="#909090" stroke-width="1"/></g><g transform="translate(618 120)"><path d="M0.5 5L6 1L19 3V14L13 18L0.5 15Z" fill="url(#gGray)" stroke="#a0a0a0" stroke-width="1"/><path d="M13 7V18M0.5 5L13 7L19 3" stroke="#a8a8a8" stroke-width=".8" fill="none"/></g><g transform="translate(648 118.5)"><circle cx="8" cy="8" r="7.5" fill="url(#gGray)" stroke="#a0a0a0"/><path d="M8 9L20 4V17L8 21Z" fill="#d0d0d0" stroke="#a0a0a0" stroke-width="1"/></g><g transform="translate(684.5 121)"><path d="M0.5 0.5H13.5L18.5 5.5V15.5H0.5Z" fill="url(#gPov)" stroke="#000" stroke-width="1"/><path d="M13.5 0.5V5.5H18.5" fill="none" stroke="#000" stroke-width=".7"/><text x="2" y="12.5" font-family="Liberation Sans" font-size="10" font-weight="bold" fill="#000">//</text></g><g transform="translate(714.5 121)"><path d="M0.5 0.5H13.5L18.5 5.5V15.5H0.5Z" fill="url(#gPov)" stroke="#000" stroke-width="1"/><path d="M13.5 0.5V5.5H18.5" fill="none" stroke="#000" stroke-width=".7"/><text x="1.5" y="12.5" font-family="Liberation Sans" font-size="8" font-weight="bold" fill="#000">Pov</text></g><g transform="translate(17.5 149.5)"><path d="M5 1L8.5 5H6.5V15H16V13L20 16.5L16 20V18H3.5V5H1.5Z" fill="#c8c4bc" stroke="#808080" stroke-width="1"/></g><g transform="translate(48 151)"><path d="M5 6A7 7 0 1 1 11 17" fill="none" stroke="#808080" stroke-width="3"/><path d="M5 6A7 7 0 1 1 11 17" fill="none" stroke="#d0ccc4" stroke-width="1.2"/><path d="M1 5L6 1V9Z" fill="#c8c4bc" stroke="#808080"/></g><g transform="translate(78 150.5)"><path d="M10 0.5L14 4.5H11.5V8.5H15.5V6L20 10L15.5 14V11.5H11.5V15.5H14L10 20L6 15.5H8.5V11.5H4.5V14L0.5 10L4.5 6V8.5H8.5V4.5H6Z" fill="#c8c4bc" stroke="#808080" stroke-width="1"/></g><g transform="translate(108 152)"><path d="M3 0.5H1V17.5H3M17 0.5H19V17.5H17" fill="none" stroke="#808080" stroke-width="1.2"/><rect x="5.0" y="2.0" width="1" height="3" fill="#909090"/><rect x="8.2" y="2.0" width="1" height="3" fill="#909090"/><rect x="10.9" y="2.5" width="2" height="2.2" fill="none" stroke="#909090" stroke-width=".8"/><rect x="14.100000000000001" y="2.5" width="2" height="2.2" fill="none" stroke="#909090" stroke-width=".8"/><rect x="4.5" y="6.3" width="2" height="2.2" fill="none" stroke="#909090" stroke-width=".8"/><rect x="8.2" y="5.8" width="1" height="3" fill="#909090"/><rect x="10.9" y="6.3" width="2" height="2.2" fill="none" stroke="#909090" stroke-width=".8"/><rect x="14.100000000000001" y="6.3" width="2" height="2.2" fill="none" stroke="#909090" stroke-width=".8"/><rect x="4.5" y="10.1" width="2" height="2.2" fill="none" stroke="#909090" stroke-width=".8"/><rect x="7.7" y="10.1" width="2" height="2.2" fill="none" stroke="#909090" stroke-width=".8"/><rect x="11.4" y="9.6" width="1" height="3" fill="#909090"/><rect x="14.100000000000001" y="10.1" width="2" height="2.2" fill="none" stroke="#909090" stroke-width=".8"/><rect x="4.5" y="13.899999999999999" width="2" height="2.2" fill="none" stroke="#909090" stroke-width=".8"/><rect x="7.7" y="13.899999999999999" width="2" height="2.2" fill="none" stroke="#909090" stroke-width=".8"/><rect x="10.9" y="13.899999999999999" width="2" height="2.2" fill="none" stroke="#909090" stroke-width=".8"/><rect x="14.600000000000001" y="13.399999999999999" width="1" height="3" fill="#909090"/></g><g transform="translate(19 184)"><rect width="18" height="18" fill="#a8a8a8"/><path d="M0 0H18L0 18Z" fill="#dcdcdc"/><path d="M0 0H18V18Z" fill="url(#gTexGrad)" opacity=".7"/><path d="M1 17L17 1" stroke="#505050"/><rect x="0.75" y="0.75" width="16.5" height="16.5" fill="none" stroke="#6a6a6a" stroke-width="1.5"/></g><g transform="translate(55 184)"><rect width="18" height="18" fill="url(#gTexGrad)"/><path d="M1 1H17V7C13 9 10 6 6 8C4 9 2 8 1 8Z" fill="#eceae6"/><path d="M1 8C2 8 4 9 6 8C10 6 13 9 17 7" stroke="#808080" fill="none" stroke-width=".8"/><rect x="0.75" y="0.75" width="16.5" height="16.5" fill="none" stroke="#6a6a6a" stroke-width="1.5"/></g><g transform="translate(85 184)"><rect width="18" height="18" fill="#505050"/><path d="M4 1L8 14H10L14 1Z" fill="#b0b0b0"/><ellipse cx="9" cy="14" rx="4" ry="2.2" fill="#e8e8e8"/><rect x="0.5" y="0.5" width="17" height="17" fill="none" stroke="#000" stroke-width="1.2"/></g><g transform="translate(115 184)"><rect width="18" height="18" fill="#c8c8c8"/><circle cx="6" cy="6" r="4" fill="#dadada"/><circle cx="13" cy="12" r="4" fill="#d8d8d8"/><path d="M3 14L8 9M11 4L15 7" stroke="#b0b0b0"/><rect x="0.75" y="0.75" width="16.5" height="16.5" fill="none" stroke="#6a6a6a" stroke-width="1.5"/></g><g transform="translate(145 184)"><rect width="18" height="18" fill="#d0d0d0"/><circle cx="5" cy="5" r="3" fill="#e0e0e0"/><circle cx="13" cy="13" r="3" fill="#bdbdbd"/><path d="M9 1V17M1 9H17" stroke="#909090" stroke-width="1"/><rect x="0.75" y="0.75" width="16.5" height="16.5" fill="none" stroke="#6a6a6a" stroke-width="1.5"/></g><g transform="translate(175 184)"><rect width="18" height="18" fill="#c8c8c8"/><text x="2.2" y="8" font-family="Liberation Sans" font-size="6.5" font-weight="bold" fill="#202020" textLength="13" lengthAdjust="spacingAndGlyphs">[0.1.</text><text x="2.2" y="15" font-family="Liberation Sans" font-size="6.5" font-weight="bold" fill="#202020" textLength="13" lengthAdjust="spacingAndGlyphs">[0.3.</text><rect x="0.75" y="0.75" width="16.5" height="16.5" fill="none" stroke="#6a6a6a" stroke-width="1.5"/></g><g transform="translate(211 184)"><rect width="18" height="18" fill="#c8c8c8"/><path d="M2 4C4 1 8 2 8 5C8 8 5 9 3 8C1 7 1 5 2 4ZM10 2C13 1 17 2 16 5C15 7 11 7 10 5ZM7 11C9 9 13 10 14 12C15 15 12 17 10 16C8 15 6 13 7 11ZM1 12C3 12 4 15 3 17H1Z" fill="#727272"/><rect x="0.75" y="0.75" width="16.5" height="16.5" fill="none" stroke="#6a6a6a" stroke-width="1.5"/></g><g transform="translate(241 184)"><rect width="18" height="18" fill="#c4c4c4"/><circle cx="9" cy="9" r="6.5" fill="none" stroke="#a8a8a8" stroke-width="1.2"/><circle cx="9" cy="9" r="4" fill="none" stroke="#a0a0a0" stroke-width="1.2"/><circle cx="9" cy="9" r="1.5" fill="none" stroke="#989898" stroke-width="1"/><rect x="0.75" y="0.75" width="16.5" height="16.5" fill="none" stroke="#6a6a6a" stroke-width="1.5"/></g><g transform="translate(271 184)"><path d="M0.5 0.5H17.5V2.5L13 7V11L17.5 15.5V17.5H0.5V15.5L5 11V7L0.5 2.5Z" fill="#c8c8c8" stroke="#6a6a6a" stroke-width="1.2"/><path d="M3 2C6 1 9 3 8 6C7 8 5 9 5 7M10 11C13 10 15 13 14 16H9C8 14 8 12 10 11ZM1 16C2 14 4 14 5 15V17H1Z" fill="#727272"/><rect x="1" y="0.5" width="16" height="2" fill="#6a6a6a"/><rect x="1" y="15.5" width="16" height="2" fill="#6a6a6a"/></g><g transform="translate(307 184)"><rect width="18" height="18" fill="#d4d4d4"/><path d="M3 5C6 3 8 6 10 9C12 12 14 14 17 16" stroke="#909090" stroke-width="1.8" fill="none"/><circle cx="13" cy="5" r="2" fill="#e4e4e4"/><rect x="0.75" y="0.75" width="16.5" height="16.5" fill="none" stroke="#6a6a6a" stroke-width="1.5"/></g><g transform="translate(337 184)"><rect width="18" height="18" fill="#d0d0d0"/><rect x="1" y="1" width="16" height="6" fill="#e8e8e4"/><path d="M1 8C4 7 6 9 9 8C11 7 13 9 17 8M8 11L14 16" stroke="#909090" stroke-width="1" fill="none"/><rect x="0.75" y="0.75" width="16.5" height="16.5" fill="none" stroke="#6a6a6a" stroke-width="1.5"/></g><g transform="translate(367 184)"><rect width="18" height="18" fill="#d0d0d0"/><path d="M11 6L15 8M3 12L6 13M12 12L15 15" stroke="#808080" stroke-width="1.2"/><path d="M9 1V17M1 9H17" stroke="#808080" stroke-width="1"/><rect x="0.75" y="0.75" width="16.5" height="16.5" fill="none" stroke="#6a6a6a" stroke-width="1.5"/></g><g transform="translate(397 184)"><rect width="18" height="18" fill="#c8c8c8"/><text x="2.2" y="8" font-family="Liberation Sans" font-size="6.5" font-weight="bold" fill="#202020" textLength="13" lengthAdjust="spacingAndGlyphs">[0.1.</text><text x="2.2" y="15" font-family="Liberation Sans" font-size="6.5" font-weight="bold" fill="#202020" textLength="13" lengthAdjust="spacingAndGlyphs">[0.3.</text><rect x="0.75" y="0.75" width="16.5" height="16.5" fill="none" stroke="#6a6a6a" stroke-width="1.5"/></g><g transform="translate(427 184)"><rect width="18" height="18" fill="#c8c8c8"/><circle cx="6" cy="6" r="4" fill="#dadada"/><circle cx="13" cy="12" r="4" fill="#d8d8d8"/><path d="M3 14L8 9M11 4L15 7" stroke="#b0b0b0"/><rect x="0.75" y="0.75" width="16.5" height="16.5" fill="none" stroke="#6a6a6a" stroke-width="1.5"/></g><g transform="translate(457 184)"><rect width="18" height="18" fill="url(#gGraySq)"/><rect x="0.75" y="0.75" width="16.5" height="16.5" fill="none" stroke="#6a6a6a" stroke-width="1.5"/></g><g transform="translate(487 184)"><rect width="18" height="18" fill="#a8a8a8"/><rect x="1" y="9" width="8" height="8" fill="#e0e0e0"/><rect x="9" y="1" width="8" height="8" fill="#d0d0d0"/><rect x="0.75" y="0.75" width="16.5" height="16.5" fill="none" stroke="#6a6a6a" stroke-width="1.5"/></g><g transform="translate(517 184)"><rect width="18" height="18" fill="#c8c8c8"/><text x="2.2" y="8" font-family="Liberation Sans" font-size="6.5" font-weight="bold" fill="#202020" textLength="13" lengthAdjust="spacingAndGlyphs">[0.1.</text><text x="2.2" y="15" font-family="Liberation Sans" font-size="6.5" font-weight="bold" fill="#202020" textLength="13" lengthAdjust="spacingAndGlyphs">[0.3.</text><rect x="0.75" y="0.75" width="16.5" height="16.5" fill="none" stroke="#6a6a6a" stroke-width="1.5"/></g><g transform="translate(547 184)"><rect width="18" height="18" fill="#c8c8c8"/><circle cx="6" cy="6" r="4" fill="#dadada"/><circle cx="13" cy="12" r="4" fill="#d8d8d8"/><path d="M3 14L8 9M11 4L15 7" stroke="#b0b0b0"/><rect x="0.75" y="0.75" width="16.5" height="16.5" fill="none" stroke="#6a6a6a" stroke-width="1.5"/></g><g transform="translate(577 184)"><rect width="18" height="18" fill="url(#gGraySq)"/><rect x="0.75" y="0.75" width="16.5" height="16.5" fill="none" stroke="#6a6a6a" stroke-width="1.5"/></g><g transform="translate(607 184)"><rect width="18" height="18" fill="#a0a0a0"/><rect x="1" y="9" width="8" height="8" fill="#f4f4f4"/><rect x="9" y="1" width="8" height="8" fill="#f4f4f4"/><rect x="1" y="1" width="8" height="8" fill="#888"/><rect x="0.75" y="0.75" width="16.5" height="16.5" fill="none" stroke="#6a6a6a" stroke-width="1.5"/></g><g transform="translate(637 184)"><rect width="18" height="18" fill="#c8c8c8"/><text x="2.2" y="8" font-family="Liberation Sans" font-size="6.5" font-weight="bold" fill="#202020" textLength="13" lengthAdjust="spacingAndGlyphs">[0.1.</text><text x="2.2" y="15" font-family="Liberation Sans" font-size="6.5" font-weight="bold" fill="#202020" textLength="13" lengthAdjust="spacingAndGlyphs">[0.3.</text><rect x="0.75" y="0.75" width="16.5" height="16.5" fill="none" stroke="#6a6a6a" stroke-width="1.5"/></g><g transform="translate(667 184)"><rect width="18" height="18" fill="#d8d8d8"/><path d="M2 5C5 3 8 7 11 5C13 4 15 5 16 6M2 10C5 8 8 12 11 10C13 9 15 10 16 11M3 14C6 13 9 15 15 13" stroke="#a0a0a0" stroke-width="1.2" fill="none"/><rect x="0.75" y="0.75" width="16.5" height="16.5" fill="none" stroke="#6a6a6a" stroke-width="1.5"/></g><g transform="translate(697 184)"><rect width="18" height="18" fill="#d0d0d0"/><path d="M9 2V16M2 9H16" stroke="#707070" stroke-width="1.2"/><path d="M4 4L7 7M14 4L11 7M4 14L7 11M14 14L11 11" stroke="#a0a0a0"/><rect x="0.75" y="0.75" width="16.5" height="16.5" fill="none" stroke="#6a6a6a" stroke-width="1.5"/></g><g transform="translate(727 184)"><rect width="18" height="18" fill="#c8c8c8"/><text x="2.2" y="8" font-family="Liberation Sans" font-size="6.5" font-weight="bold" fill="#202020" textLength="13" lengthAdjust="spacingAndGlyphs">[0.1.</text><text x="2.2" y="15" font-family="Liberation Sans" font-size="6.5" font-weight="bold" fill="#202020" textLength="13" lengthAdjust="spacingAndGlyphs">[0.3.</text><rect x="0.75" y="0.75" width="16.5" height="16.5" fill="none" stroke="#6a6a6a" stroke-width="1.5"/></g><g transform="translate(757 184)"><rect width="18" height="18" fill="#c8c8c8"/><circle cx="6" cy="6" r="4" fill="#dadada"/><circle cx="13" cy="12" r="4" fill="#d8d8d8"/><path d="M3 14L8 9M11 4L15 7" stroke="#b0b0b0"/><rect x="0.75" y="0.75" width="16.5" height="16.5" fill="none" stroke="#6a6a6a" stroke-width="1.5"/></g><g transform="translate(268 216)"><rect x="0.5" y="0.5" width="19" height="17" fill="#fff" stroke="#000" stroke-width="1.2"/><path d="M3 3.5C3 1.5 10 1.5 10 3.5V12C10 14 3 14 3 12Z" fill="#f0f0f0" stroke="#404040" stroke-width=".8"/><rect x="3.2" y="8.5" width="1.8" height="4" fill="#e00000"/><path d="M5 6L8 4.5L12 6L13 9L20 12L21 15L18 16L11 12L7 13L5 10Z" fill="#e0e0e0" stroke="#000" stroke-width="1"/></g><g transform="translate(298 216)"><rect x="0.5" y="0.5" width="19" height="17" fill="#fff" stroke="#000" stroke-width="1.2"/><path d="M3 3.5C3 1.5 10 1.5 10 3.5V12C10 14 3 14 3 12Z" fill="#f0f0f0" stroke="#404040" stroke-width=".8"/><rect x="3.2" y="8.5" width="2.5" height="4" fill="#e00000"/><path d="M7 8C7 6 16 6 17 8V13C16 15 8 15 7 13Z" fill="#10b010" stroke="#000" stroke-width="1"/><ellipse cx="12" cy="8" rx="5" ry="1.6" fill="#60e060"/></g><g transform="translate(4 5)"><rect x="0.5" y="1" width="6.5" height="11" rx="1.5" fill="#20b020"/><rect x="2" y="3" width="2" height="7" fill="#c0f0c0"/><path d="M10 0L15 12C13 14 7 14 5 12Z" fill="#80b8ff"/><path d="M10 1L8 12C9 13 11 13 12 12Z" fill="#e0f0ff" opacity=".8"/></g><rect x="757" y="14" width="6" height="2" fill="#000"/><rect x="773.5" y="7.5" width="8" height="7" fill="none" stroke="#000" stroke-width="1"/><rect x="773" y="7" width="9" height="2" fill="#000"/><path d="M789.5 7.5L796.5 14.5M796.5 7.5L789.5 14.5" stroke="#000" stroke-width="1.5"/><path d="M788.5 189L792 193L788.5 197M793 189L796.5 193L793 197" fill="none" stroke="#000" stroke-width="1.6"/><path d="M15.5 252V257M20 261.5H26M35.5 271V333M35 279.5H45M40 297.5H45M35 315.5H45M35 333.5H45" fill="none" stroke="#202020" stroke-width="1" stroke-dasharray="1 1"/><rect x="11.5" y="257.5" width="8" height="8" fill="#fff" stroke="#808080"/><rect x="13" y="261" width="5" height="1" fill="#000"/><rect x="31.5" y="293.5" width="8" height="8" fill="#fff" stroke="#808080"/><rect x="33" y="297" width="5" height="1" fill="#000"/><rect x="35" y="295" width="1" height="5" fill="#000"/><rect x="25.5" y="252.5" width="126" height="17" fill="none" stroke="#d4d0c8" stroke-width="1" stroke-dasharray="1 1"/><g><path d="M400.5 334.5V304.5" stroke="#00ff00" stroke-width="1"/><path d="M400.5 304.5Q399.0 309.5 396.0 311.5H405.0Q402.0 309.5 400.5 304.5Z" fill="none" stroke="#00ff00" stroke-width="1"/><path d="M400.5 334.5H370.5" stroke="#0000ff" stroke-width="1"/><path d="M370.5 334.5Q375.5 333.0 377.5 330.0V339.0Q375.5 336.0 370.5 334.5Z" fill="none" stroke="#0000ff" stroke-width="1"/><path d="M385.5 304.5H415.5V334.5H385.5Z" fill="none" stroke="#f0f080"/><rect x="396.0" y="330.0" width="9" height="9" fill="none" stroke="#ff0000" stroke-width="1"/><path d="M396.5 330.5L405.5 339.5M405.5 330.5L396.5 339.5" stroke="#ff0000" stroke-width=".8" opacity=".7"/><path d="M400.5 334.5L485 250" stroke="#f0f080"/><path d="M668.5 334.5V304.5" stroke="#00ff00" stroke-width="1"/><path d="M668.5 304.5Q667.0 309.5 664.0 311.5H673.0Q670.0 309.5 668.5 304.5Z" fill="none" stroke="#00ff00" stroke-width="1"/><path d="M668.5 334.5H698.5" stroke="#ff0000" stroke-width="1"/><path d="M698.5 334.5Q693.5 333.0 691.5 330.0V339.0Q693.5 336.0 698.5 334.5Z" fill="none" stroke="#ff0000" stroke-width="1"/><path d="M653.5 304.5H683.5V334.5H653.5Z" fill="none" stroke="#f0f080"/><rect x="664.0" y="330.0" width="9" height="9" fill="none" stroke="#0000ff" stroke-width="1"/><path d="M664.5 330.5L673.5 339.5M673.5 330.5L664.5 339.5" stroke="#0000ff" stroke-width=".8" opacity=".7"/><path d="M668.5 334.5L753 250" stroke="#f0f080"/><path d="M400.5 516.5V486.5" stroke="#0000ff" stroke-width="1"/><path d="M400.5 486.5Q399.0 491.5 396.0 493.5H405.0Q402.0 491.5 400.5 486.5Z" fill="none" stroke="#0000ff" stroke-width="1"/><path d="M400.5 516.5H430.5" stroke="#ff0000" stroke-width="1"/><path d="M430.5 516.5Q425.5 515.0 423.5 512.0V521.0Q425.5 518.0 430.5 516.5Z" fill="none" stroke="#ff0000" stroke-width="1"/><path d="M385.5 501.5H415.5V531.5H385.5Z" fill="none" stroke="#f0f080"/><rect x="396.0" y="512.0" width="9" height="9" fill="none" stroke="#00ff00" stroke-width="1"/><path d="M396.5 512.5L405.5 521.5M405.5 512.5L396.5 521.5" stroke="#00ff00" stroke-width=".8" opacity=".7"/><path d="M400.5 516.5L483 599" stroke="#f0f080"/><path d="M668.5 492.5L654.5 499.5M668.5 492.5L683.5 499.5M654.5 499.5L668.5 506.5M683.5 499.5L668.5 506.5M654.5 499.5L655.5 515.5M683.5 499.5L682.5 515.5M655.5 515.5L668.5 524.5M682.5 515.5L668.5 524.5M668.5 506.5L668.5 524.5M668.5 492.5L668.5 509.5M655.5 515.5L668.5 509.5M682.5 515.5L668.5 509.5" stroke="#f0f080" stroke-width="1.3" fill="none"/><path d="M669 499L674 503.5H664Z" fill="#00ff00" stroke="#00ff00"/><path d="M669 516L677 511" stroke="#0000ff"/><rect x="676.5" y="507.5" width="5" height="6" fill="none" stroke="#0000ff" stroke-width="1.3"/><path d="M669 516L679 521" stroke="#ff0000"/><path d="M678 518L684 520L682 525L678 524Z" fill="none" stroke="#ff0000" stroke-width="1.3"/><path d="M536 437L543 442" stroke="#f0f080"/></g><g transform="translate(27 254)"><circle cx="7" cy="6.5" r="6.3" fill="url(#gGray)" stroke="#000" stroke-width="1"/><path d="M5 1V12M9 1V12M1 6.5H13" stroke="#505050" stroke-width="1"/></g><g transform="translate(47 271)"><circle cx="7.5" cy="7.5" r="6.8" fill="url(#gGray)" stroke="#000" stroke-width="1.2"/><path d="M3 5C4 2.5 8 2 10 4L11 8L15 13L14 15L9 11C6 11 3 9 3 5Z" fill="#e8e8e8" stroke="#000" stroke-width=".9"/><circle cx="6" cy="6" r="1.5" fill="#505050"/></g><g transform="translate(48 290)"><path d="M0.5 4L4 0.5H15V12L12 15H0.5Z" fill="#00a000" stroke="#000" stroke-width="1"/><path d="M1 4L4 1H14.5L11.5 4Z" fill="#40e040"/><path d="M11.5 4.5L14.5 1.5V12L11.5 14.5Z" fill="#007000"/></g><g transform="translate(49 307)"><path d="M6.5 0.5C10 0.5 12.5 3 12.5 6C12.5 9 10.5 10 10 12H3C2.5 10 0.5 9 0.5 6C0.5 3 3 0.5 6.5 0.5Z" fill="url(#gYellow)" stroke="#000" stroke-width="1"/><rect x="3.5" y="12" width="6" height="4" fill="#606060" stroke="#000" stroke-width=".8"/></g><g transform="translate(48 326)"><path d="M0.5 3.5L3.5 0.5H14.5V11L11.5 14H0.5Z" fill="#707070" stroke="#000" stroke-width="1"/><circle cx="6" cy="8.5" r="2.5" fill="#c0c0c0"/></g><g transform="translate(15 446)"><circle cx="7" cy="6.5" r="6.3" fill="url(#gGray)" stroke="#000" stroke-width="1"/><path d="M5 1V12M9 1V12M1 6.5H13" stroke="#505050" stroke-width="1"/></g></svg>
</body></html>
